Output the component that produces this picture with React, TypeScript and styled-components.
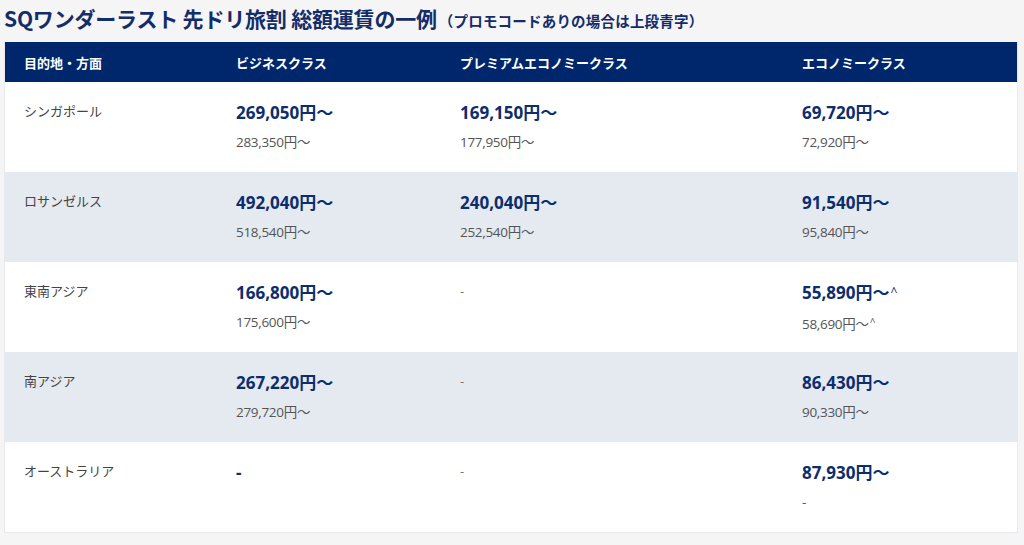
import React from "react";
import styled, { createGlobalStyle } from "styled-components";

const GlobalStyle = createGlobalStyle`
  html, body {
    margin: 0;
    padding: 0;
    background: #f5f5f5;
  }
  body {
    font-family: "Noto Sans CJK JP", "Noto Sans", sans-serif;
  }
`;

const Page = styled.div`
  padding: 2px 6px 0 4px;
  width: 1024px;
  box-sizing: border-box;
`;

const Title = styled.h2`
  margin: 0;
  height: 40px;
  display: flex;
  align-items: baseline;
  color: #132c6a;
  font-family: "Noto Sans CJK JP", sans-serif;
  font-weight: 700;
  font-size: 21px;
  line-height: 32px;
  letter-spacing: -0.2px;
  white-space: nowrap;
`;

const Sub = styled.span`
  font-size: 14.5px;
  font-weight: 700;
  letter-spacing: 0.2px;
  margin-left: 2px;
`;

const Table = styled.div`
  display: grid;
  grid-template-columns: 212px 224px 342px 1fr;
  border: 1px solid #e6e9f0;
  border-top: none;
  background: #fff;
`;

const HeadCell = styled.div`
  background: #00276b;
  color: #fff;
  font-weight: 700;
  font-size: 13px;
  height: 40px;
  display: flex;
  align-items: center;
  padding-left: 19px;
`;

const Cell = styled.div<{ $alt: boolean }>`
  background: ${(p) => (p.$alt ? "#e5e9f0" : "#fff")};
  height: 90px;
  box-sizing: border-box;
  padding: 18px 19px 0 19px;
  display: flex;
  flex-direction: column;
`;

const Name = styled.div`
  font-size: 13px;
  line-height: 22px;
  color: #444;
`;

const Price = styled.div`
  font-family: "Open Sans", "Noto Sans CJK JP", sans-serif;
  font-weight: 700;
  font-size: 17px;
  line-height: 26px;
  color: #0d2d6e;
  white-space: nowrap;
`;

const Regular = styled.div`
  font-family: "Open Sans", "Noto Sans CJK JP", sans-serif;
  font-size: 13.5px;
  line-height: 22px;
  margin-top: 5px;
  color: #555;
  letter-spacing: -0.3px;
  white-space: nowrap;
`;

const Dash = styled.div`
  font-size: 12px;
  line-height: 22px;
  color: #666;
`;

const Caret = styled.span<{ $small?: boolean }>`
  font-size: ${(p) => (p.$small ? "10px" : "12px")};
  position: relative;
  top: -3px;
  font-weight: 400;
  margin-left: 1px;
`;

type Fare = { promo: string; normal: string; caret?: boolean } | "none" | "dashBig";

const rows: { name: string; fares: Fare[] }[] = [
  {
    name: "シンガポール",
    fares: [
      { promo: "269,050", normal: "283,350" },
      { promo: "169,150", normal: "177,950" },
      { promo: "69,720", normal: "72,920" },
    ],
  },
  {
    name: "ロサンゼルス",
    fares: [
      { promo: "492,040", normal: "518,540" },
      { promo: "240,040", normal: "252,540" },
      { promo: "91,540", normal: "95,840" },
    ],
  },
  {
    name: "東南アジア",
    fares: [
      { promo: "166,800", normal: "175,600" },
      "none",
      { promo: "55,890", normal: "58,690", caret: true },
    ],
  },
  {
    name: "南アジア",
    fares: [
      { promo: "267,220", normal: "279,720" },
      "none",
      { promo: "86,430", normal: "90,330" },
    ],
  },
  {
    name: "オーストラリア",
    fares: ["dashBig", "none", { promo: "87,930", normal: "-" }],
  },
];

const heads = ["目的地・方面", "ビジネスクラス", "プレミアムエコノミークラス", "エコノミークラス"];

function FareCell({ fare, alt }: { fare: Fare; alt: boolean }) {
  if (fare === "none") {
    return (
      <Cell $alt={alt}>
        <Dash>-</Dash>
      </Cell>
    );
  }
  if (fare === "dashBig") {
    return (
      <Cell $alt={alt}>
        <Price>-</Price>
      </Cell>
    );
  }
  return (
    <Cell $alt={alt}>
      <Price>
        {fare.promo}円〜{fare.caret && <Caret>^</Caret>}
      </Price>
      {fare.normal === "-" ? (
        <Regular>-</Regular>
      ) : (
        <Regular>
          {fare.normal}円〜{fare.caret && <Caret $small>^</Caret>}
        </Regular>
      )}
    </Cell>
  );
}

export default function App() {
  return (
    <Page>
      <GlobalStyle />
      <Title>
        SQワンダーラスト 先ドリ旅割 総額運賃の一例<Sub>（プロモコードありの場合は上段青字）</Sub>
      </Title>
      <Table>
        {heads.map((h) => (
          <HeadCell key={h}>{h}</HeadCell>
        ))}
        {rows.map((r, i) => (
          <React.Fragment key={r.name}>
            <Cell $alt={i % 2 === 1}>
              <Name>{r.name}</Name>
            </Cell>
            {r.fares.map((f, j) => (
              <FareCell key={j} fare={f} alt={i % 2 === 1} />
            ))}
          </React.Fragment>
        ))}
      </Table>
    </Page>
  );
}
